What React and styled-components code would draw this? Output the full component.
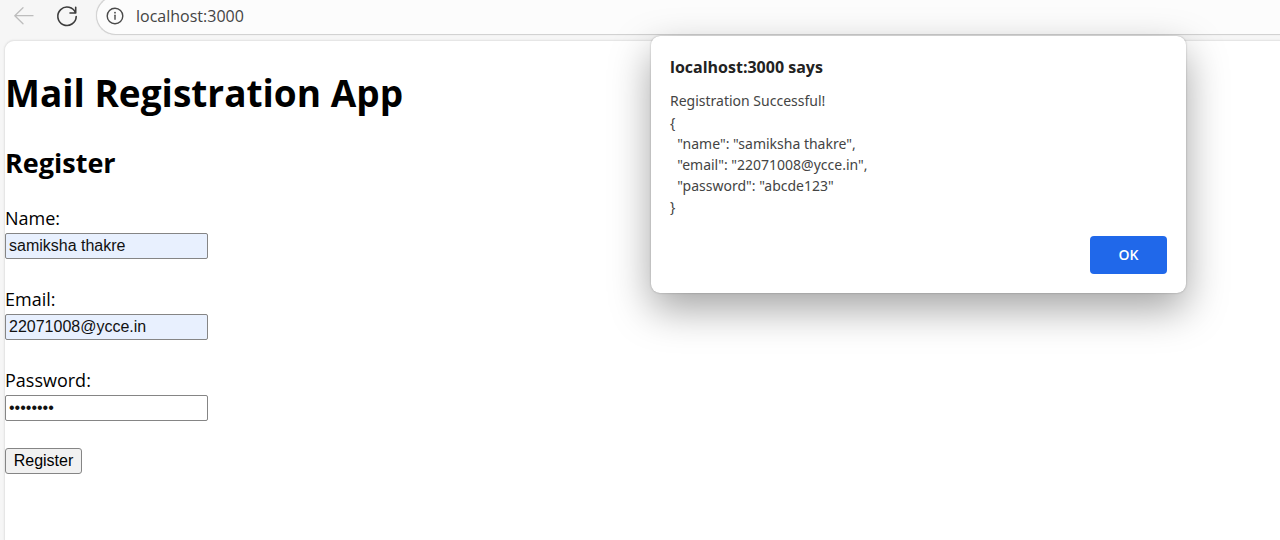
import React from "react";
import styled, { createGlobalStyle } from "styled-components";

const GlobalStyle = createGlobalStyle`
  * { box-sizing: border-box; }
  html, body, #root { min-height: 100vh; }
  body {
    margin: 0;
    overflow: hidden;
    background: #f6f6f6;
    color: #000;
    font-family: "Open Sans", "Noto Sans", sans-serif;
  }
`;

const Browser = styled.div`
  position: relative;
  display: flex;
  flex-direction: column;
  min-height: 100vh;
`;

const Toolbar = styled.header`
  display: flex;
  align-items: flex-end;
  height: 40px;
  padding: 0 0 5px 12px;
  overflow: hidden;
`;

const ToolButton = styled.button`
  display: flex;
  align-items: center;
  justify-content: center;
  width: 24px;
  height: 38px;
  margin-right: ${(p) => p.$gap}px;
  padding: 0;
  border: 0;
  background: none;
  color: ${(p) => (p.disabled ? "#bdbdbd" : "#3c3c3c")};
`;

const AddressBar = styled.div`
  display: flex;
  flex: 1;
  align-items: center;
  gap: 11px;
  height: 39px;
  padding-left: 8px;
  border: 1px solid #d2d2d2;
  border-right: 0;
  border-radius: 20px 0 0 20px;
  background: #fcfcfc;
  box-shadow: 0 0 1px #d2d2d2;
  color: #4a4a4a;
`;

const AddressInput = styled.input`
  flex: 1;
  min-width: 0;
  padding: 0;
  border: 0;
  outline: 0;
  background: none;
  color: #444;
  font: 16px/24px "Open Sans", "Noto Sans", sans-serif;
`;

const Page = styled.main`
  flex: 1;
  margin-left: 4px;
  border: solid #e6e6e6;
  border-width: 1px 0 0 1px;
  border-top-left-radius: 10px;
  background: #fff;
  box-shadow: 0 0 2px #e2e2e2;
`;

const Title = styled.h1`
  margin: 26px 0 0;
  font-size: 37px;
  line-height: 52px;
`;

const Subtitle = styled.h2`
  margin: 26px 0 24px;
  font-size: 27px;
  line-height: 36px;
`;

const Form = styled.form`
  display: flex;
  flex-direction: column;
  align-items: flex-start;
  gap: 27px;
`;

const Field = styled.div`
  display: flex;
  flex-direction: column;
  gap: 2px;
`;

const Label = styled.label`
  font-size: 18px;
  line-height: 26px;
`;

const TextInput = styled.input`
  width: 203px;
  height: 26px;
  padding: 0 3px 1px;
  border: 1px solid #858585;
  border-radius: 2px;
  outline: 0;
  background: ${(p) => (p.$filled ? "#e8f0fe" : "#fff")};
  color: #111;
  font: 16px "Liberation Sans", Arial, sans-serif;
`;

const SubmitButton = styled.button`
  width: 77px;
  height: 26px;
  padding: 0;
  border: 1px solid #858585;
  border-radius: 3px;
  background: #f1f1f1;
  color: #000;
  font: 16px "Liberation Sans", Arial, sans-serif;
`;

const Dialog = styled.section`
  position: absolute;
  top: 36px;
  right: 94px;
  display: flex;
  flex-direction: column;
  width: 535px;
  padding: 19px;
  border-radius: 9px;
  background: #fff;
  box-shadow: 0 0 2px rgba(0, 0, 0, 0.3), 0 16px 40px rgba(0, 0, 0, 0.36);
`;

const DialogTitle = styled.h2`
  margin: 0 0 11px;
  color: #222;
  font-size: 16px;
  line-height: 24px;
`;

const Message = styled.p`
  margin: 0;
  color: #444;
  font: 14px/22px "Noto Sans", "Open Sans", sans-serif;
`;

const Payload = styled.pre`
  margin: 0;
  color: #444;
  font: 14px/21px "Noto Sans", "Open Sans", sans-serif;
`;

const OkButton = styled.button`
  align-self: flex-end;
  width: 77px;
  height: 38px;
  margin-top: 19px;
  padding: 0 0 2px;
  border: 0;
  border-radius: 4px;
  background: #2068ea;
  color: #fff;
  font: 600 14px "Open Sans", "Noto Sans", sans-serif;
`;

const fields = [
  { id: "name", label: "Name:", type: "text", value: "samiksha thakre", filled: true },
  { id: "email", label: "Email:", type: "email", value: "22071008@ycce.in", filled: true },
  { id: "password", label: "Password:", type: "password", value: "abcde123", filled: false },
];

const payload = JSON.stringify(
  Object.fromEntries(fields.map((f) => [f.id, f.value])),
  null,
  2
);

const BackIcon = () => (
  <svg width="24" height="24" viewBox="0 0 24 24" fill="none" stroke="currentColor" strokeWidth="1.3" strokeLinecap="round" strokeLinejoin="round" aria-hidden="true">
    <path d="M21 11.7H2.8M11 3.7L2.8 11.7L11 19.7" />
  </svg>
);

const ReloadIcon = () => (
  <svg width="24" height="24" viewBox="0 0 24 24" fill="none" stroke="currentColor" strokeWidth="1.6" strokeLinecap="round" strokeLinejoin="round" aria-hidden="true">
    <path d="M20.6 9A9.2 9.2 0 1 0 21.2 12.5M20.7 3.2V9H15" />
  </svg>
);

const InfoIcon = () => (
  <svg width="20" height="20" viewBox="0 0 20 20" fill="none" stroke="currentColor" strokeWidth="1.4" strokeLinecap="round" aria-hidden="true">
    <circle cx="10" cy="10" r="7.8" />
    <path d="M10 9.3V13.3" />
    <circle cx="10" cy="6.7" r="0.9" fill="currentColor" stroke="none" />
  </svg>
);

export default function App() {
  return (
    <Browser>
      <GlobalStyle />
      <Toolbar>
        <ToolButton type="button" aria-label="Back" disabled $gap={19}>
          <BackIcon />
        </ToolButton>
        <ToolButton type="button" aria-label="Reload" $gap={17}>
          <ReloadIcon />
        </ToolButton>
        <AddressBar>
          <InfoIcon />
          <AddressInput aria-label="Address" defaultValue="localhost:3000" />
        </AddressBar>
      </Toolbar>
      <Page>
        <Title>Mail Registration App</Title>
        <Subtitle>Register</Subtitle>
        <Form onSubmit={(e) => e.preventDefault()}>
          {fields.map((f) => (
            <Field key={f.id}>
              <Label htmlFor={f.id}>{f.label}</Label>
              <TextInput id={f.id} type={f.type} defaultValue={f.value} $filled={f.filled} />
            </Field>
          ))}
          <SubmitButton type="submit">Register</SubmitButton>
        </Form>
      </Page>
      <Dialog role="alertdialog" aria-labelledby="dialog-title">
        <DialogTitle id="dialog-title">localhost:3000 says</DialogTitle>
        <Message>Registration Successful!</Message>
        <Payload>{payload}</Payload>
        <OkButton type="button">OK</OkButton>
      </Dialog>
    </Browser>
  );
}
